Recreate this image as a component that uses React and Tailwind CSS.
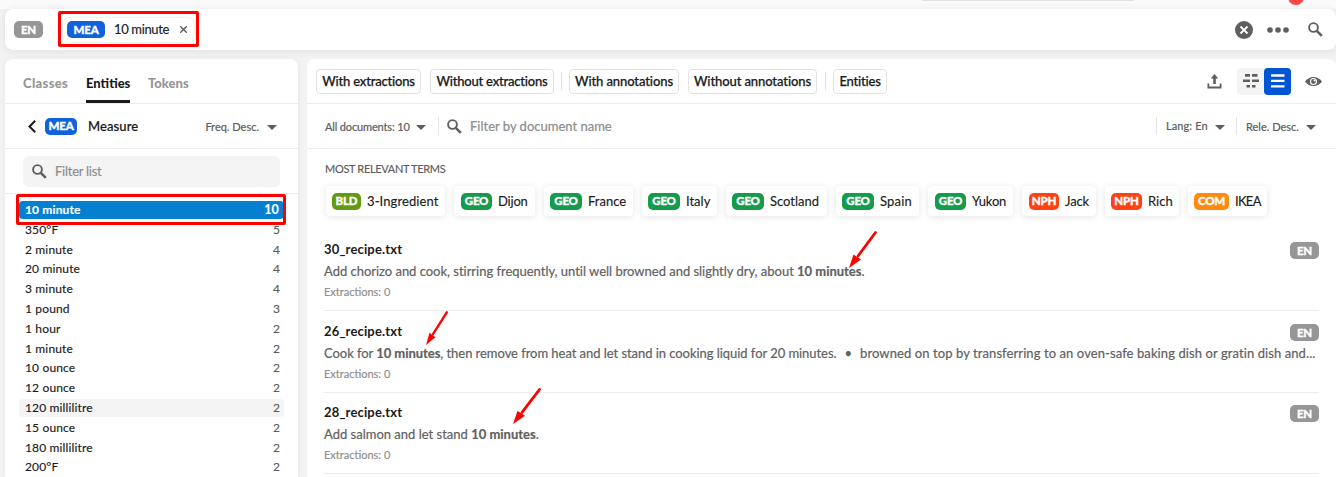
import React from "react";

const rows = [
  ["10 minute", 10],
  ["350°F", 5],
  ["2 minute", 4],
  ["20 minute", 4],
  ["3 minute", 4],
  ["1 pound", 3],
  ["1 hour", 2],
  ["1 minute", 2],
  ["10 ounce", 2],
  ["12 ounce", 2],
  ["120 millilitre", 2],
  ["15 ounce", 2],
  ["180 millilitre", 2],
  ["200°F", 2],
];

const terms = [
  ["BLD", "3-Ingredient", "w-[119px] pl-1.5", "w-[29px] bg-[#639a13]", "tracking-[0.1px]"],
  ["GEO", "Dijon", "w-[81px] pl-[7px]", "w-[31px] bg-[#149b4b]", "tracking-[-0.2px]"],
  ["GEO", "France", "w-[89px] pl-1.5", "w-8 bg-[#149b4b]", ""],
  ["GEO", "Italy", "w-[75px] pl-1.5", "w-8 bg-[#149b4b]", ""],
  ["GEO", "Scotland", "w-[101px] pl-1.5", "w-8 bg-[#149b4b]", ""],
  ["GEO", "Spain", "w-[83px] pl-1.5", "w-8 bg-[#149b4b]", "tracking-[0.2px]"],
  ["GEO", "Yukon", "w-[85px] pl-[7px]", "w-[31px] bg-[#149b4b]", "tracking-[-0.2px]"],
  ["NPH", "Jack", "w-[74px] pl-[7px]", "w-[30px] bg-[#ff4216]", "tracking-[-0.1px]"],
  ["NPH", "Rich", "w-[74px] pl-1.5", "w-[31px] bg-[#ff4216]", ""],
  ["COM", "IKEA", "w-[79px] pl-1.5", "w-[35px] bg-[#ff8a0f]", "tracking-[-0.7px]"],
];

function Badge({ className, children }) {
  return (
    <span className={"flex h-[17px] shrink-0 items-center justify-center rounded-[5px] text-[11.5px] font-black tracking-[-0.2px] text-white [-webkit-text-stroke:0.3px] " + className}>
      {children}
    </span>
  );
}

function Caret({ className = "" }) {
  return (
    <svg className={"h-[5px] w-2.5 shrink-0 translate-y-px " + className} viewBox="0 0 10 5">
      <path d="M0 0h10L5 5z" fill="#5c5c5c" />
    </svg>
  );
}

function Search({ className }) {
  return (
    <svg className={"shrink-0 " + className} viewBox="0 0 15 15" fill="none" stroke="#5f5f5f">
      <circle cx="5.5" cy="5.5" r="4.4" strokeWidth="1.9" />
      <path d="M8.8 8.8l5 5" strokeWidth="2.6" />
    </svg>
  );
}

function Arrow({ className }) {
  return (
    <svg className={"absolute w-7 " + className} viewBox="0 0 28 38" preserveAspectRatio="none">
      <path d="M26.5 1.5L9 25" stroke="#f00" strokeWidth="2.8" strokeLinecap="round" />
      <path d="M0 37L4.500 23.500L7.500 25.500L12 28.500z" fill="#f00" />
    </svg>
  );
}

function FilterButton({ className, children }) {
  return (
    <button className={"flex h-[25px] items-center justify-center rounded border border-[#e2e2e2] pt-0.5 text-[13px] font-medium whitespace-nowrap text-[#1b1b1b] [-webkit-text-stroke:0.25px] " + className}>
      {children}
    </button>
  );
}

function Doc({ name, className, textClass = "", children }) {
  return (
    <article className={"flex border-b border-[#ececec] " + className}>
      <div className="flex w-[966px] shrink-0 flex-col whitespace-nowrap">
        <h3 className="h-[22px] text-[13px] leading-[18px] font-bold tracking-[0.15px] text-[#1b1b1b]">{name}</h3>
        <p className={"h-[21px] text-[13px] leading-[18px] text-[#616161] [-webkit-text-stroke:0.2px] " + textClass}>{children}</p>
        <p className="text-[11px] leading-[18px] text-[#909090] [-webkit-text-stroke:0.2px]">Extractions: 0</p>
      </div>
      <Badge className="mt-[2px] w-[29px] bg-[#969696]">EN</Badge>
    </article>
  );
}

export default function App() {
  return (
    <div className="relative flex h-[477px] w-[1336px] flex-col overflow-hidden bg-[#f3f3f3] pl-[5px] font-['Lato',sans-serif] text-[#1b1b1b]">
      <div className="-ml-[5px] h-[9px] shrink-0 bg-[#fafafa]" />
      <div className="absolute top-0 left-[922px] h-px w-[212px] bg-[#e2e2e2]" />
      <div className="absolute -top-[11px] left-[1288px] size-4 rounded-full bg-[#ff4747]" />

      <header className="z-10 flex h-[41px] shrink-0 items-center rounded-lg bg-white shadow-[0_1px_9px_rgba(0,0,0,0.09)]">
        <Badge className="ml-[9px] w-[29px] bg-[#969696]">EN</Badge>
        <div className="ml-5 flex h-[24px] w-[131px] items-center rounded-md pl-1 shadow-[0_0_3px_rgba(0,0,0,0.15)]">
          <Badge className="h-4 w-[38px] bg-[#1061dc]">MEA</Badge>
          <span className="ml-[9px] w-[66px] pt-px text-[13px] tracking-[-0.35px] whitespace-nowrap [-webkit-text-stroke:0.15px]">10 minute</span>
          <svg className="size-[7px]" viewBox="0 0 7 7" stroke="#555" strokeWidth="1.3">
            <path d="M.3.3l6.4 6.4M6.7.3L.3 6.7" />
          </svg>
        </div>
        <div className="ml-auto flex items-center">
          <svg className="size-[18px]" viewBox="0 0 18 18">
            <circle cx="9" cy="9" r="9" fill="#5f5f5f" />
            <path d="M5.500 5.500l7 7M12.500 5.500l-7 7" stroke="#fff" strokeWidth="1.8" />
          </svg>
          <svg className="ml-3.5 h-1.5 w-[22px]" viewBox="0 0 22 6" fill="#5f5f5f">
            <circle cx="3" cy="3" r="2.8" />
            <circle cx="11" cy="3" r="2.8" />
            <circle cx="19" cy="3" r="2.8" />
          </svg>
          <Search className="mr-[13px] ml-[19px] size-[15px]" />
        </div>
      </header>

      <div className="mt-[9px] flex h-[418px] gap-[9px]">
        <aside className="flex w-[293px] shrink-0 flex-col rounded-t-lg bg-white shadow-[0_1px_6px_rgba(0,0,0,0.06)]">
          <nav className="flex h-[45px] shrink-0 border-b border-[#ececec] pl-[18px] text-[13px] font-black text-[#969696]">
            <span className="flex w-[63px] pt-[15px] tracking-[0.35px]">Classes</span>
            <span className="flex w-11 border-b-3 border-[#1b1b1b] pt-[15px] text-[#1b1b1b]">Entities</span>
            <span className="ml-[18px] pt-[15px]">Tokens</span>
          </nav>
          <div className="flex h-[45px] shrink-0 items-center border-b border-[#ececec] pr-[21px] pl-[23px]">
            <svg className="h-[13px] w-2" viewBox="0 0 8 13" fill="none" stroke="#1b1b1b" strokeWidth="2">
              <path d="M7.2.8L1.500 6.500l5.700 5.700" />
            </svg>
            <Badge className="ml-[9px] w-8 bg-[#1061dc]">MEA</Badge>
            <span className="ml-[11px] pt-0.5 text-[13px] font-medium tracking-[0.1px] [-webkit-text-stroke:0.2px]">Measure</span>
            <span className="mr-2 ml-auto pt-0.5 text-[11px] text-[#5c5c5c] [-webkit-text-stroke:0.2px]">Freq. Desc.</span>
            <Caret className="translate-y-[2px]" />
          </div>
          <div className="flex h-[45px] shrink-0 items-center border-b border-[#ececec] pl-[18px]">
            <div className="flex h-[31px] w-[257px] items-center rounded-md bg-[#f4f4f4] pl-[9px]">
              <Search className="size-[15px]" />
              <span className="ml-2 pt-0.5 text-[13px] tracking-[-0.25px] text-[#8c8c8c] [-webkit-text-stroke:0.15px]">Filter list</span>
            </div>
          </div>
          <ul className="flex flex-col gap-[1.8px] pt-[7px] pl-3.5 text-[12px] [-webkit-text-stroke:0.15px]">
            {rows.map(([label, count], i) => (
              <li
                key={label}
                className={
                  "flex h-[18px] w-[265px] items-center justify-between rounded pl-1.5 tracking-[0.15px] " +
                  (i === 0 ? "bg-[#0580d0] pr-[5px] font-bold text-white" : i === 10 ? "bg-[#f4f4f4] pr-1" : "pr-1")
                }
              >
                <span>{label}</span>
                <span className={i === 0 ? "text-[12.5px]" : "text-[#5c5c5c]"}>{count}</span>
              </li>
            ))}
          </ul>
        </aside>

        <main className="flex w-[1029px] shrink-0 flex-col rounded-t-lg bg-white">
          <div className="flex h-[45px] shrink-0 items-center border-b border-[#ececec] pl-[9px]">
            <FilterButton className="w-[105px] tracking-[-0.2px]">With extractions</FilterButton>
            <FilterButton className="ml-[9px] w-[124px] tracking-[-0.2px]">Without extractions</FilterButton>
            <span className="ml-[7px] h-[18px] w-px bg-[#e2e2e2]" />
            <FilterButton className="ml-[7px] w-[110px] tracking-[-0.1px]">With annotations</FilterButton>
            <FilterButton className="ml-[9px] w-[129px] tracking-[-0.1px]">Without annotations</FilterButton>
            <span className="ml-2 h-[18px] w-px bg-[#e2e2e2]" />
            <FilterButton className="ml-[7px] w-[54px] tracking-[-0.2px]">Entities</FilterButton>
            <svg className="ml-auto h-[15px] w-[15px]" viewBox="0 0 15 15" fill="#5f5f5f">
              <path d="M7.500 0l3.800 4.500H8.800V10H6.200V4.500H3.700zM.5 9.500h1.800v3h10.400v-3h1.800V14.400H.5z" />
            </svg>
            <div className="ml-[15px] flex h-[27px] w-[54px] rounded bg-[#f4f4f4]">
              <div className="flex size-[27px] items-center justify-center">
                <svg className="h-3.5 w-4" viewBox="0 0 16 14" fill="#5f5f5f">
                  <path d="M2 0h5v2.700H2zM9 0h5.500v2.700H9zM0 5.500h7v2.500H0zM9 5.500h7v2.500H9zM3.500 11h3.500v2.500H3.500zM9 11h3.500v2.500H9z" />
                </svg>
              </div>
              <div className="flex size-[27px] items-center justify-center rounded bg-[#0055d4]">
                <svg className="h-3.5 w-3.5" viewBox="0 0 14 14" fill="#fff">
                  <path d="M0 .3h13.500v2.400H0zM0 5.700h13.500v2.400H0zM0 11.200h13.500v2.400H0z" />
                </svg>
              </div>
            </div>
            <svg className="mr-3.5 ml-3.5 h-[9px] w-[17px]" viewBox="0 0 17 9">
              <path d="M0 4.500Q3.500 0 8.500 0T17 4.500Q13.500 9 8.500 9T0 4.500z" fill="#5f5f5f" />
              <circle cx="8.500" cy="4.500" r="3" fill="none" stroke="#fff" strokeWidth="1.100" />
              <circle cx="9.600" cy="3.500" r="1.100" fill="#fff" />
            </svg>
          </div>

          <div className="flex h-[45px] shrink-0 items-center border-b border-[#ececec] pr-5 pl-[18px] text-[11px] text-[#5c5c5c] [-webkit-text-stroke:0.2px]">
            <span className="w-[91px] pt-0.5 tracking-[-0.15px] whitespace-nowrap">All documents: 10</span>
            <Caret />
            <span className="ml-3 h-[18px] w-px bg-[#e6e6e6]" />
            <Search className="ml-2 size-[15px]" />
            <span className="ml-2 pt-0.5 text-[13px] text-[#8c8c8c]">Filter by document name</span>
            <span className="ml-auto h-[18px] w-px bg-[#e6e6e6]" />
            <span className="ml-[9px] w-[49px] tracking-[0.1px] whitespace-nowrap">Lang: En</span>
            <Caret />
            <span className="ml-[11px] h-[18px] w-px bg-[#e6e6e6]" />
            <span className="ml-[9px] w-[60px] pt-0.5 whitespace-nowrap">Rele. Desc.</span>
            <Caret />
          </div>

          <h2 className="mt-3 ml-[18px] text-[11px] leading-[16px] tracking-[-0.32px] text-[#5c5c5c] [-webkit-text-stroke:0.15px]">MOST RELEVANT TERMS</h2>
          <div className="mt-[9px] ml-[19px] flex gap-[9px]">
            {terms.map(([tag, text, box, badge, spacing]) => (
              <div
                key={text}
                className={"flex h-[30px] items-center rounded text-[13px] whitespace-nowrap shadow-[0_1px_7px_rgba(0,0,0,0.11)] " + box}
              >
                <Badge className={badge}>{tag}</Badge>
                <span className={"ml-1.5 pt-0.5 [-webkit-text-stroke:0.15px] " + spacing}>{text}</span>
              </div>
            ))}
          </div>

          <div className="mt-6 ml-[17px] flex w-[995px] flex-col">
            <Doc name="30_recipe.txt" className="h-[71px]" textClass="tracking-[-0.02px]">
              Add chorizo and cook, stirring frequently, until well browned and slightly dry, about <b>10 minutes</b>.
            </Doc>
            <Doc name="26_recipe.txt" className="h-[82px] pt-[11px]">
              <span className="tracking-[-0.05px]">
                Cook for <b>10 minutes</b>, then remove from heat and let stand in cooking liquid for 20 minutes.
              </span>
              <span className="mx-2">•</span>
              <span className="tracking-[0.09px]">browned on top by transferring to an oven-safe baking dish or gratin dish and...</span>
            </Doc>
            <Doc name="28_recipe.txt" className="h-[81px] pt-[10px]">
              Add salmon and let stand <b>10 minutes</b>.
            </Doc>
          </div>
        </main>
      </div>

      <div className="absolute top-[11px] left-[58px] z-20 h-9 w-[141px] rounded-[2px] border-3 border-[#f00]" />
      <div className="absolute top-[194px] left-4 z-20 h-[31px] w-[270px] rounded-[2px] border-3 border-[#f00]" />
      <Arrow className="top-[231px] left-[849px] h-[38px]" />
      <Arrow className="top-[311px] left-[426px] h-[35px] w-[22px]" />
      <Arrow className="top-[388px] left-[513px] h-[37px]" />
    </div>
  );
}
